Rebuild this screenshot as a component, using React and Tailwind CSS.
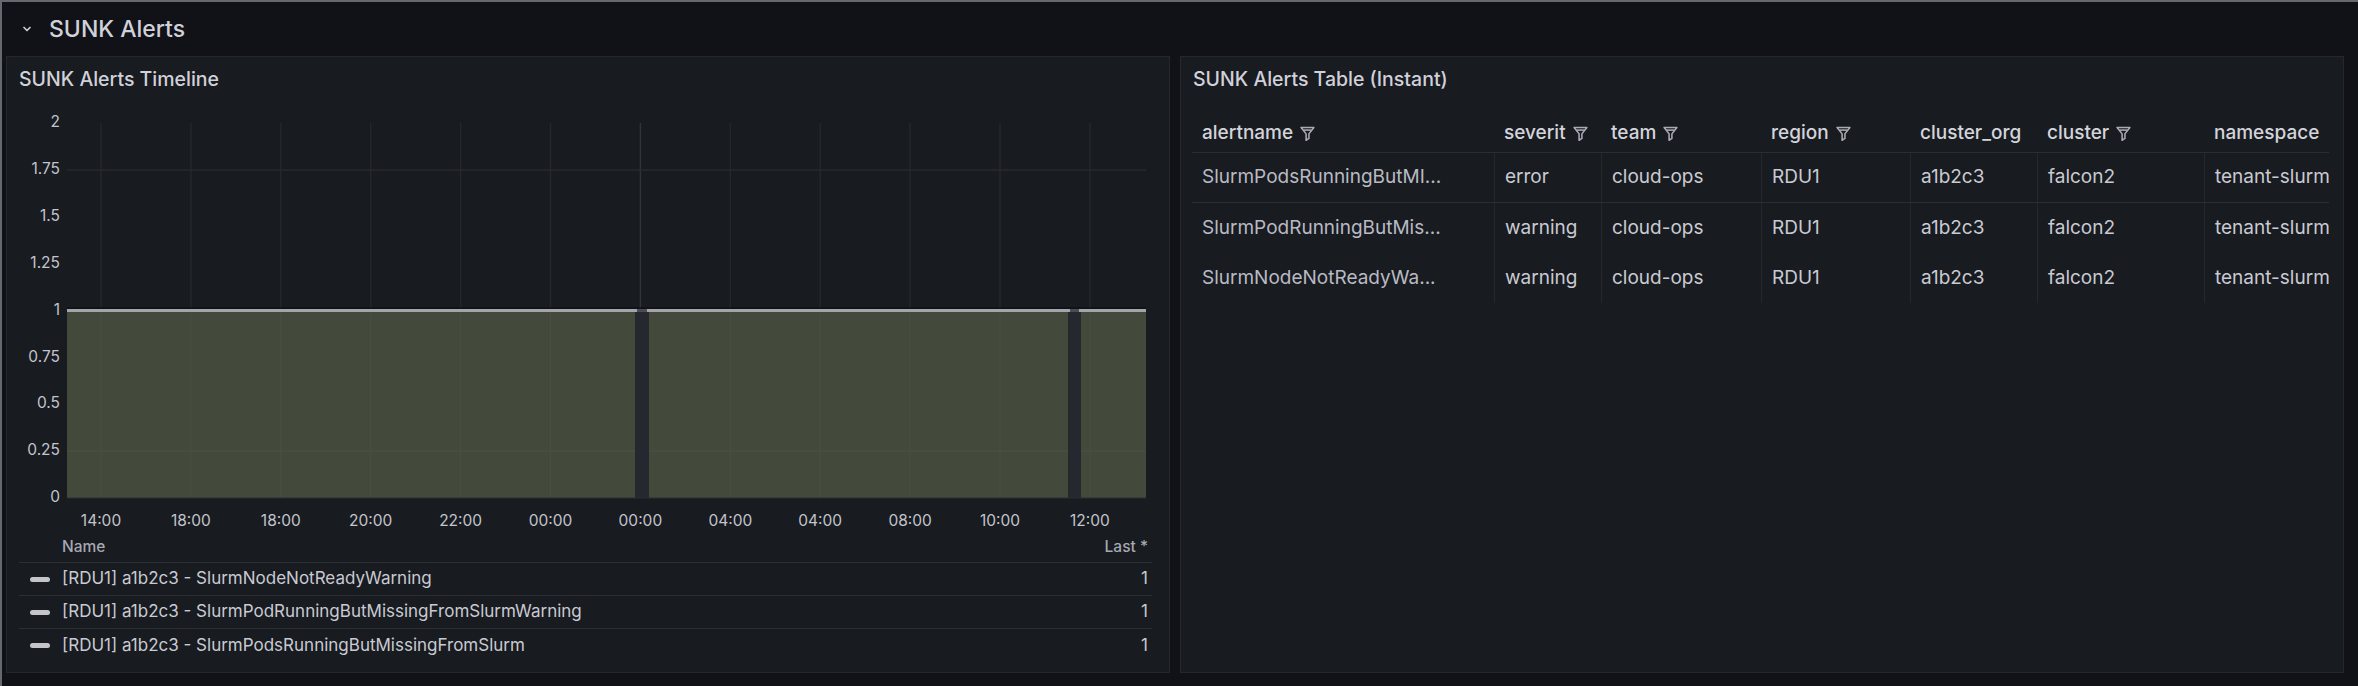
import React from "react";

const xLabels = ["14:00","18:00","18:00","20:00","22:00","00:00","00:00","04:00","04:00","08:00","10:00","12:00"];
const yTicks = [2,1.75,1.5,1.25,1,0.75,0.5,0.25,0];
const yPos = (v) => 395 - v * 187.5;
const xPos = (i) => 94 + i * 89.9;

function Funnel() {
  return (
    <svg width="17" height="17" viewBox="0 0 24 24" fill="none" stroke="currentColor" strokeWidth="2.2" strokeLinejoin="round" className="text-[#a9aab4] shrink-0">
      <path d="M3 3.5h18l-7 9V19l-4 2.5v-9z" />
      <path d="M6.2 7.2h11.6" />
    </svg>
  );
}

function Chart() {
  return (
    <svg width="1162" height="428" viewBox="0 0 1162 428" className="block">
      {xLabels.map((l, i) => (
        <line key={"v" + i} x1={xPos(i)} x2={xPos(i)} y1={20} y2={207} stroke={i === 6 ? "#30333a" : "#24272d"} strokeWidth="1.5" />
      ))}
      <line x1="60" x2="1139" y1={yPos(1.75)} y2={yPos(1.75)} stroke="#272a30" strokeWidth="1.5" />
      <rect x="60" y={yPos(1)} width="1079" height={395 - yPos(1)} fill="#434a3c" />
      <line x1="60" x2="1139" y1={yPos(0.25)} y2={yPos(0.25)} stroke="#4b5247" strokeWidth="1" />
      {xLabels.map((l, i) => (
        <line key={"vf" + i} x1={xPos(i)} x2={xPos(i)} y1={210} y2={395} stroke="#485043" strokeWidth="1" />
      ))}
      <rect x="628" y={yPos(1)} width="14" height={395 - yPos(1)} fill="#25282e" />
      <rect x="1061" y={yPos(1)} width="13" height={395 - yPos(1)} fill="#25282e" />
      <line x1="60" x2="1139" y1={yPos(1) - 2.5} y2={yPos(1) - 2.5} stroke="#111215" strokeWidth="1.5" />
      <line x1="60" x2="1139" y1={yPos(1)} y2={yPos(1)} stroke="#a2a5ab" strokeWidth="3" />
      <line x1="630" x2="640" y1={yPos(1)} y2={yPos(1)} stroke="#4a4d53" strokeWidth="3" />
      <line x1="1063" x2="1072" y1={yPos(1)} y2={yPos(1)} stroke="#4a4d53" strokeWidth="3" />
      <line x1="60" x2="1139" y1="395" y2="395" stroke="#2c2f35" strokeWidth="1" />
      {yTicks.map((v) => (
        <text key={v} x="53" y={yPos(v)} textAnchor="end" dominantBaseline="middle" fill="#c3c4cd" fontSize="15.5" fontFamily="Inter, sans-serif">
          {v}
        </text>
      ))}
      {xLabels.map((l, i) => (
        <text key={"x" + i} x={xPos(i)} y="419" textAnchor="middle" dominantBaseline="middle" fill="#c3c4cd" fontSize="15.5" fontFamily="Inter, sans-serif">
          {l}
        </text>
      ))}
    </svg>
  );
}

const legendRows = [
  "[RDU1] a1b2c3 - SlurmNodeNotReadyWarning",
  "[RDU1] a1b2c3 - SlurmPodRunningButMissingFromSlurmWarning",
  "[RDU1] a1b2c3 - SlurmPodsRunningButMissingFromSlurm",
];

const cols = [
  { name: "alertname", w: "w-[302px]", filter: true },
  { name: "severit", w: "w-[107px]", filter: true },
  { name: "team", w: "w-[160px]", filter: true },
  { name: "region", w: "w-[149px]", filter: true },
  { name: "cluster_org", w: "w-[127px]", filter: false },
  { name: "cluster", w: "w-[167px]", filter: true },
  { name: "namespace", w: "flex-1", filter: false },
];

const rows = [
  ["SlurmPodsRunningButMI...", "error", "cloud-ops", "RDU1", "a1b2c3", "falcon2", "tenant-slurm"],
  ["SlurmPodRunningButMis...", "warning", "cloud-ops", "RDU1", "a1b2c3", "falcon2", "tenant-slurm"],
  ["SlurmNodeNotReadyWa...", "warning", "cloud-ops", "RDU1", "a1b2c3", "falcon2", "tenant-slurm"],
];

export default function App() {
  return (
    <div className="w-[2358px] h-[686px] overflow-hidden bg-[#111217] border-t-2 border-l-2 border-[#646870] flex flex-col font-[Inter,sans-serif] text-[#ccccdc]">
      <div className="h-[54px] shrink-0 flex items-center pl-[19px]">
        <svg width="12" height="12" viewBox="0 0 24 24" fill="none" stroke="#c8c9d2" strokeWidth="3.5" strokeLinecap="round" strokeLinejoin="round">
          <path d="M6 9l6 6 6-6" />
        </svg>
        <span className="ml-[16px] text-[23px] font-medium leading-none text-[#d0d1da]">SUNK Alerts</span>
      </div>
      <div className="flex gap-[10px] pl-[4px]">
        <div className="w-[1164px] h-[617px] shrink-0 bg-[#181b1f] border border-[#24272c] flex flex-col">
          <div className="h-[46px] shrink-0 flex items-center pl-[12px] text-[19.5px] font-medium text-[#d0d1da]">SUNK Alerts Timeline</div>
          <Chart />
          <div className="ml-[12px] mr-[17px] flex flex-col">
            <div className="h-[32px] flex items-center justify-between border-b border-[#2c2f35] pl-[43px] pr-[4px] text-[15.5px] font-medium text-[#a7a8b3]">
              <span>Name</span>
              <span>Last *</span>
            </div>
            {legendRows.map((r, i) => (
              <div key={i} className={"h-[33px] flex items-center pl-[11px] pr-[4px] text-[17px] text-[#c9cad3] " + (i < 2 ? "border-b border-[#2c2f35]" : "")}>
                <span className="w-[20px] h-[5px] rounded-[3px] bg-[#c3c5cb] shrink-0" />
                <span className="ml-[12px] flex-1">{r}</span>
                <span>1</span>
              </div>
            ))}
          </div>
        </div>
        <div className="w-[1164px] h-[617px] shrink-0 bg-[#181b1f] border border-[#24272c] flex flex-col">
          <div className="h-[46px] shrink-0 flex items-center pl-[12px] text-[19.5px] font-medium text-[#d0d1da]">SUNK Alerts Table (Instant)</div>
          <div className="ml-[11px] mr-[14px] flex flex-col">
            <div className="h-[50px] pt-[12px] flex border-b border-[#2a2d33]">
              {cols.map((c) => (
                <div key={c.name} className={c.w + " flex items-center gap-[6px] px-[10px] text-[19px] font-medium text-[#d3d4dc] overflow-hidden whitespace-nowrap"}>
                  <span>{c.name}</span>
                  {c.filter && <Funnel />}
                </div>
              ))}
            </div>
            {rows.map((r, ri) => (
              <div key={ri} className={"h-[50px] flex " + (ri === 0 ? "border-b border-[#2a2d33]" : "")}>
                {r.map((cell, ci) => (
                  <div key={ci} className={cols[ci].w + " flex items-center px-[10px] text-[19px] whitespace-nowrap overflow-hidden " + (ci > 0 ? "border-l border-[#25282d] " : "") + (ci === 0 ? "text-[#b9bac4]" : "text-[#c9cad3]")}>
                    {cell}
                  </div>
                ))}
              </div>
            ))}
          </div>
        </div>
      </div>
    </div>
  );
}
